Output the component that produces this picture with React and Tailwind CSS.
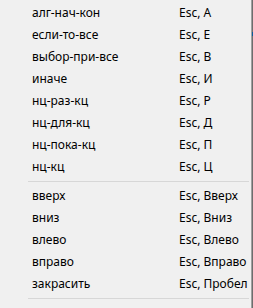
import React from "react";

const top = [
  ["алг-нач-кон", "Esc, А"],
  ["если-то-все", "Esc, Е"],
  ["выбор-при-все", "Esc, В"],
  ["иначе", "Esc, И"],
  ["нц-раз-кц", "Esc, Р"],
  ["нц-для-кц", "Esc, Д"],
  ["нц-пока-кц", "Esc, П"],
  ["нц-кц", "Esc, Ц"],
];

const moves = [
  ["вверх", "Esc, Вверх"],
  ["вниз", "Esc, Вниз"],
  ["влево", "Esc, Влево"],
  ["вправо", "Esc, Вправо"],
  ["закрасить", "Esc, Пробел"],
];

const Item = ({ label, keys }) => (
  <div className="flex items-center h-[22px] pb-[2px]">
    <span className="w-[179px] pl-[32px]">{label}</span>
    <span>{keys}</span>
  </div>
);

const Sep = () => (
  <div className="pl-[28px] pr-[2px] pt-[2px] pb-[4px]">
    <div className="h-px bg-[#d7d7d7]" />
  </div>
);

export default function App() {
  return (
    <div className="flex w-[253px] h-[308px] bg-[#f0f0f0] text-black text-[12px] leading-none font-['Noto_Sans',sans-serif]">
      <div className="w-[251px] pt-[3px]">
        {top.map(([l, k]) => (
          <Item key={l} label={l} keys={k} />
        ))}
        <Sep />
        {moves.map(([l, k]) => (
          <Item key={l} label={l} keys={k} />
        ))}
        <Sep />
      </div>
      <div className="w-px bg-[#a0a0a0]" />
      <div className="w-px flex flex-col bg-[#6d6d6d]">
        <div className="h-[32px]" />
        <div className="h-[4px] bg-[#0a5a9c]" />
      </div>
    </div>
  );
}
